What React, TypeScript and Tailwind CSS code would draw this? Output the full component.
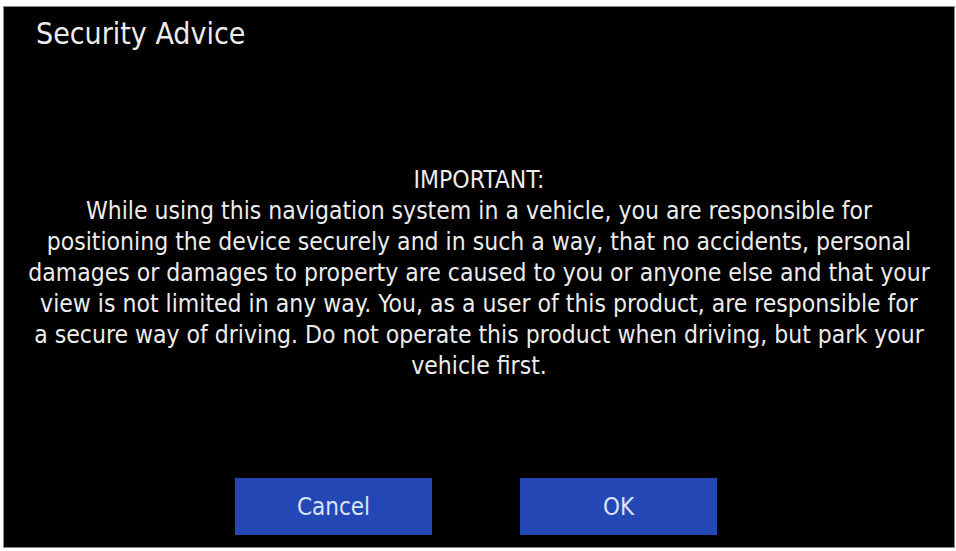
import React from 'react';

const bodyLines = [
  'While using this navigation system in a vehicle, you are responsible for',
  'positioning the device securely and in such a way, that no accidents, personal',
  'damages or damages to property are caused to you or anyone else and that your',
  'view is not limited in any way. You, as a user of this product, are responsible for',
  'a secure way of driving. Do not operate this product when driving, but park your',
  'vehicle first.',
];

const App = () => {
  return (
    <main className="w-[956px] h-[551px] bg-white pt-[6px] pl-[3px] pr-[1px] pb-[3px] overflow-hidden">
      <div
        className="h-full bg-black border border-[#8a8a8a] flex flex-col text-[#ececec]"
        style={{ fontFamily: '"DejaVu Sans Condensed", "DejaVu Sans", sans-serif' }}
      >
        {/* Title */}
        <div className="pl-[32px] pt-[10px] text-[30px] leading-[34px]">Security Advice</div>

        {/* Message */}
        <div className="mt-[113px] text-center text-[24.5px] leading-[31px]">
          <p>IMPORTANT:</p>
          {bodyLines.map((line, index) => (
            <p key={index}>{line}</p>
          ))}
        </div>

        {/* Buttons */}
        <div className="mt-auto mb-[12px] pr-[6px] flex justify-center gap-[88px]">
          <button className="w-[197px] h-[57px] bg-[#2447b6] text-[#dbe3f5] text-[24px]">Cancel</button>
          <button className="w-[197px] h-[57px] bg-[#2447b6] text-[#dbe3f5] text-[24px]">OK</button>
        </div>
      </div>
    </main>
  );
};

export default App;
